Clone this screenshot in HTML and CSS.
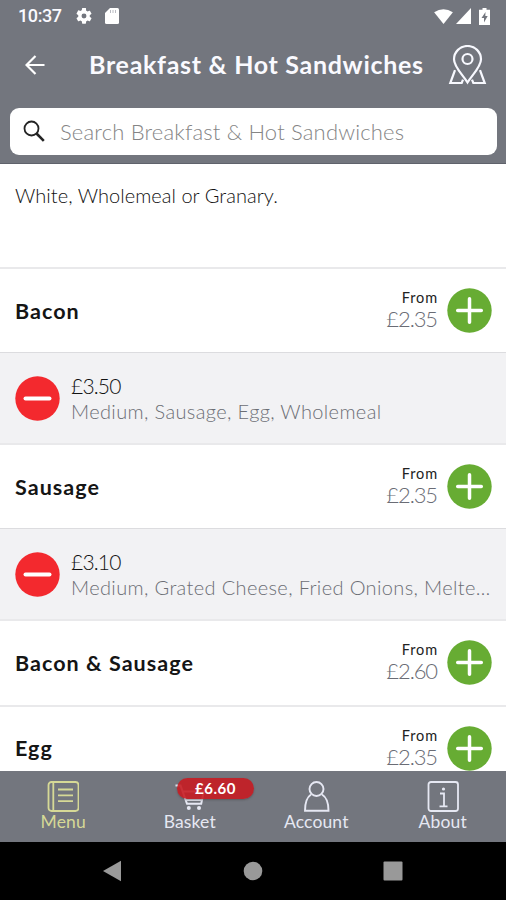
FILE: index.html
```html
<!DOCTYPE html>
<html lang="en">
<head>
<meta charset="utf-8">
<title>Breakfast &amp; Hot Sandwiches</title>
<link rel="stylesheet" href="styles.css">
</head>
<body>
<svg class="defs" aria-hidden="true">
  <symbol id="plus" viewBox="0 0 45 45"><circle cx="22.5" cy="22.5" r="22.2" fill="#67ac33"/><path d="M10.700 22.500h23.600M22.500 10.700v23.600" stroke="#fff" stroke-width="3.500" stroke-linecap="round"/></symbol>
  <symbol id="minus" viewBox="0 0 45 45"><circle cx="22.5" cy="22.5" r="22.2" fill="#f3292e"/><path d="M10.500 22.500h24" stroke="#fff" stroke-width="4" stroke-linecap="round"/></symbol>
</svg>
<div class="app">
  <header class="header">
    <div class="status">
      <span class="time">10:37</span>
      <svg class="gear" viewBox="2 2 20 20"><path fill="#fff" d="M19.14 12.94c.04-.3.06-.61.06-.94s-.02-.64-.07-.94l2.03-1.58a.49.49 0 0 0 .12-.61l-1.92-3.32a.49.49 0 0 0-.59-.22l-2.39.96a7 7 0 0 0-1.62-.94l-.36-2.54A.48.48 0 0 0 13.92 2h-3.84a.48.48 0 0 0-.47.41l-.36 2.54a7 7 0 0 0-1.62.94l-2.39-.96a.49.49 0 0 0-.59.22L2.74 8.87a.48.48 0 0 0 .12.61l2.03 1.58a6 6 0 0 0 0 1.88l-2.03 1.58a.49.49 0 0 0-.12.61l1.92 3.32c.12.22.37.29.59.22l2.39-.96c.5.38 1.03.7 1.62.94l.36 2.54c.05.24.24.41.48.41h3.84c.24 0 .44-.17.47-.41l.36-2.54a7 7 0 0 0 1.62-.94l2.39.96c.22.08.47 0 .59-.22l1.92-3.32a.48.48 0 0 0-.12-.61zM12 15.1a3.1 3.1 0 1 1 0-6.2 3.1 3.1 0 0 1 0 6.2z"/></svg>
      <svg class="sd" viewBox="0 0 14 16"><path fill="#fff" d="M5 0h7.500Q14 0 14 1.500v13Q14 16 12.500 16h-11Q0 16 0 14.500V5z"/><path d="M5.500 2v3M8 2v3M10.500 2v3" stroke="#b9bbc2" stroke-width="1"/></svg>
      <span class="grow"></span>
      <svg class="wifi" viewBox="0 0 20 16"><path fill="#fff" d="M0 3.500Q10-3 20 3.500L10 16z"/></svg>
      <svg class="signal" viewBox="0 0 15 16"><path fill="#fff" d="M15 0v16H0z"/></svg>
      <svg class="battery" viewBox="0 0 11 17"><path fill="#fff" d="M3.500 0h4v1.700H11V17H0V1.700h3.500z"/><path fill="#73767e" d="M6.500 4 2.500 10H5v4.500L8.700 8H6.300z"/></svg>
    </div>
    <div class="bar">
      <svg class="back" viewBox="0 0 20 20"><path d="M19.500 10H1.500M10.500 1 1.500 10l9 9" fill="none" stroke="#fff" stroke-width="2.200"/></svg>
      <h1 class="title">Breakfast &amp; Hot Sandwiches</h1>
      <svg class="pin" viewBox="0 0 38 40"><g fill="none" stroke="#f8f9ff" stroke-width="2.200"><path d="M19 37.500C14 29.500 5.500 22 5.500 14.300a13.500 13.300 0 0 1 27 0C32.500 22 24 29.500 19 37.500z"/><circle cx="19" cy="14" r="5"/><path d="M6.500 25.200 1.800 38h11.400l1.300-3.300M31.500 25.200 36.200 38H24.800l-1.300-3.300"/></g></svg>
    </div>
    <div class="search">
      <svg class="glass" viewBox="0 0 22 22"><g fill="none" stroke="#242424"><circle cx="8.500" cy="8.500" r="7" stroke-width="1.800"/><path d="m13.500 13.500 7.300 7.300" stroke-width="2.600"/></g></svg>
      <span class="placeholder">Search Breakfast &amp; Hot Sandwiches</span>
    </div>
  </header>
  <main class="list">
    <p class="note">White, Wholemeal or Granary.</p>
    <section class="item"><h2 class="name">Bacon</h2><div class="price"><span class="from">From</span><span class="amount">£2.35</span></div><svg class="round"><use href="#plus"/></svg></section>
    <section class="chosen"><svg class="round"><use href="#minus"/></svg><div class="detail"><span class="cost">£3.50</span><span class="options">Medium, Sausage, Egg, Wholemeal</span></div></section>
    <section class="item"><h2 class="name">Sausage</h2><div class="price"><span class="from">From</span><span class="amount">£2.35</span></div><svg class="round"><use href="#plus"/></svg></section>
    <section class="chosen"><svg class="round"><use href="#minus"/></svg><div class="detail"><span class="cost">£3.10</span><span class="options">Medium, Grated Cheese, Fried Onions, Melte…</span></div></section>
    <section class="item"><h2 class="name">Bacon &amp; Sausage</h2><div class="price"><span class="from">From</span><span class="amount">£2.60</span></div><svg class="round"><use href="#plus"/></svg></section>
    <section class="item"><h2 class="name">Egg</h2><div class="price"><span class="from">From</span><span class="amount">£2.35</span></div><svg class="round"><use href="#plus"/></svg></section>
  </main>
  <nav class="tabs">
    <div class="tab active">
      <svg class="icon" viewBox="0 0 32 31"><g fill="none" stroke="currentColor" stroke-width="1.800"><rect x="1.500" y="1" width="30" height="29" rx="3"/><path d="M6.300 1v29M11 8.500h15M11 14.300h15M11 20.100h15"/></g></svg>
      <span class="label">Menu</span>
    </div>
    <div class="tab">
      <svg class="icon" viewBox="0 0 32 31"><path fill="none" stroke="currentColor" stroke-width="2" d="M1.500 4.500h5L13 22.800h14.200l2.600-12.300H9M11.500 19h16"/><circle cx="14.800" cy="27" r="2" fill="currentColor"/><circle cx="25" cy="27" r="2" fill="currentColor"/></svg>
      <span class="label">Basket</span>
      <span class="badge">£6.60</span>
    </div>
    <div class="tab">
      <svg class="icon" viewBox="0 0 32 31"><g fill="none" stroke="currentColor" stroke-width="1.900"><circle cx="16.500" cy="8" r="7"/><path d="M11 13.500C6.500 16.500 5 21.500 5 29.700h23.500c0-8.200-1.500-13.200-6.500-16.200"/></g></svg>
      <span class="label">Account</span>
    </div>
    <div class="tab">
      <svg class="icon" viewBox="0 0 32 31"><g fill="none" stroke="currentColor" stroke-width="1.800"><rect x="1.500" y="1" width="29.500" height="29" rx="2.500"/><path d="M13 12.500h4v12.500M12.500 25.300h8"/></g><circle cx="16.500" cy="8" r="1.600" fill="currentColor"/></svg>
      <span class="label">About</span>
    </div>
  </nav>
  <footer class="system">
    <svg class="key" viewBox="0 0 20 22"><path d="M0 11 18 .8v20.400z" fill="#999"/></svg>
    <svg class="key" viewBox="0 0 20 22"><circle cx="10" cy="11" r="9.300" fill="#999"/></svg>
    <svg class="key" viewBox="0 0 20 22"><rect x=".5" y="1.500" width="19" height="19" rx="1" fill="#999"/></svg>
  </footer>
</div>
</body>
</html>
```
FILE: styles.css
```css
* { box-sizing: border-box; }
body { margin: 0; background: #fff; font-family: Lato, "Liberation Sans", sans-serif; }
h1, h2, p { margin: 0; }
svg { display: block; flex: none; }
.defs { width: 0; height: 0; position: absolute; }
.app { width: 506px; height: 900px; display: flex; flex-direction: column; overflow: hidden; }
.header { height: 164px; flex: none; background: #73767e; border-bottom: 1px solid #5f626b; color: #fafaff; }
.status { height: 32px; display: flex; align-items: center; padding: 0 16px 0 18px; }
.time { font: 500 18px/32px Roboto, sans-serif; width: 58px; letter-spacing: -.4px; }
.gear { width: 16px; height: 16px; }
.sd { width: 14px; height: 16px; margin-left: 13px; }
.grow { flex: 1; }
.wifi { width: 19px; height: 15px; }
.signal { width: 15px; height: 16px; margin-left: 3px; }
.battery { width: 11px; height: 17px; margin-left: 8px; }
.bar { height: 76px; display: flex; align-items: center; padding: 0 19px 11px 25px; }
.back { width: 20px; height: 20px; }
.title { font-size: 25px; line-height: 36px; font-weight: 700; margin: -2px 0 0 44px; flex: 1; white-space: nowrap; letter-spacing: .7px; }
.pin { width: 39px; height: 40px; }
.search { height: 47px; margin: 0 9px 0 10px; background: #fff; border-radius: 9px; display: flex; align-items: center; padding-left: 13px; }
.glass { width: 22px; height: 22px; margin-top: -2px; }
.placeholder { font-size: 22px; font-weight: 300; color: #858585; margin-left: 15px; white-space: nowrap; letter-spacing: .18px; }
.list { height: 607px; flex: none; overflow: hidden; }
.note { height: 103px; padding: 17px 15px; font-size: 20px; line-height: 28px; font-weight: 300; color: #111; letter-spacing: .04px; }
.item { height: 85.200px; border-top: 2px solid #e9e9eb; display: flex; align-items: center; padding: 0 14px 0 15px; }
.name { flex: 1; font-size: 21.500px; line-height: 28px; font-weight: 700; color: #151515; letter-spacing: 1.050px; }
.price { display: flex; flex-direction: column; align-items: flex-end; margin: -2px 9px 0 0; }
.from { font-size: 14.500px; line-height: 19px; color: #222; letter-spacing: .9px; }
.amount { font-size: 22px; line-height: 24px; font-weight: 300; color: #6a6c75; letter-spacing: -1.100px; padding-right: 1px; }
.round { width: 45px; height: 45px; }
.chosen { height: 91px; background: #f2f2f4; border-top: 1px solid #dcdcdf; display: flex; align-items: center; padding-left: 15px; }
.detail { display: flex; flex-direction: column; margin-left: 11px; }
.cost { font-size: 21px; line-height: 25px; font-weight: 300; color: #111; letter-spacing: -.8px; }
.options { font-size: 20px; line-height: 26px; font-weight: 300; color: #6c6e74; white-space: nowrap; letter-spacing: .36px; }
.tabs { height: 71px; flex: none; background: #73767e; display: flex; padding-top: 10px; }
.tab { flex: 1; display: flex; flex-direction: column; align-items: center; position: relative; color: #e6e8f3; }
.active { color: #d6d996; }
.icon { width: 32px; height: 31px; }
.label { font-size: 17.500px; line-height: 19px; letter-spacing: .15px; }
.badge { position: absolute; left: 50px; top: -3px; width: 77px; height: 21px; border-radius: 11px; background: rgba(198, 28, 34, .9); color: #fff; font-size: 15px; line-height: 20px; font-weight: 700; text-align: center; letter-spacing: .5px; padding-left: 1px; box-shadow: 0 1px 2px #4448; }
.system { flex: 1; background: #000; display: flex; align-items: center; justify-content: center; gap: 120px; }
.key { width: 20px; height: 22px; }
```
